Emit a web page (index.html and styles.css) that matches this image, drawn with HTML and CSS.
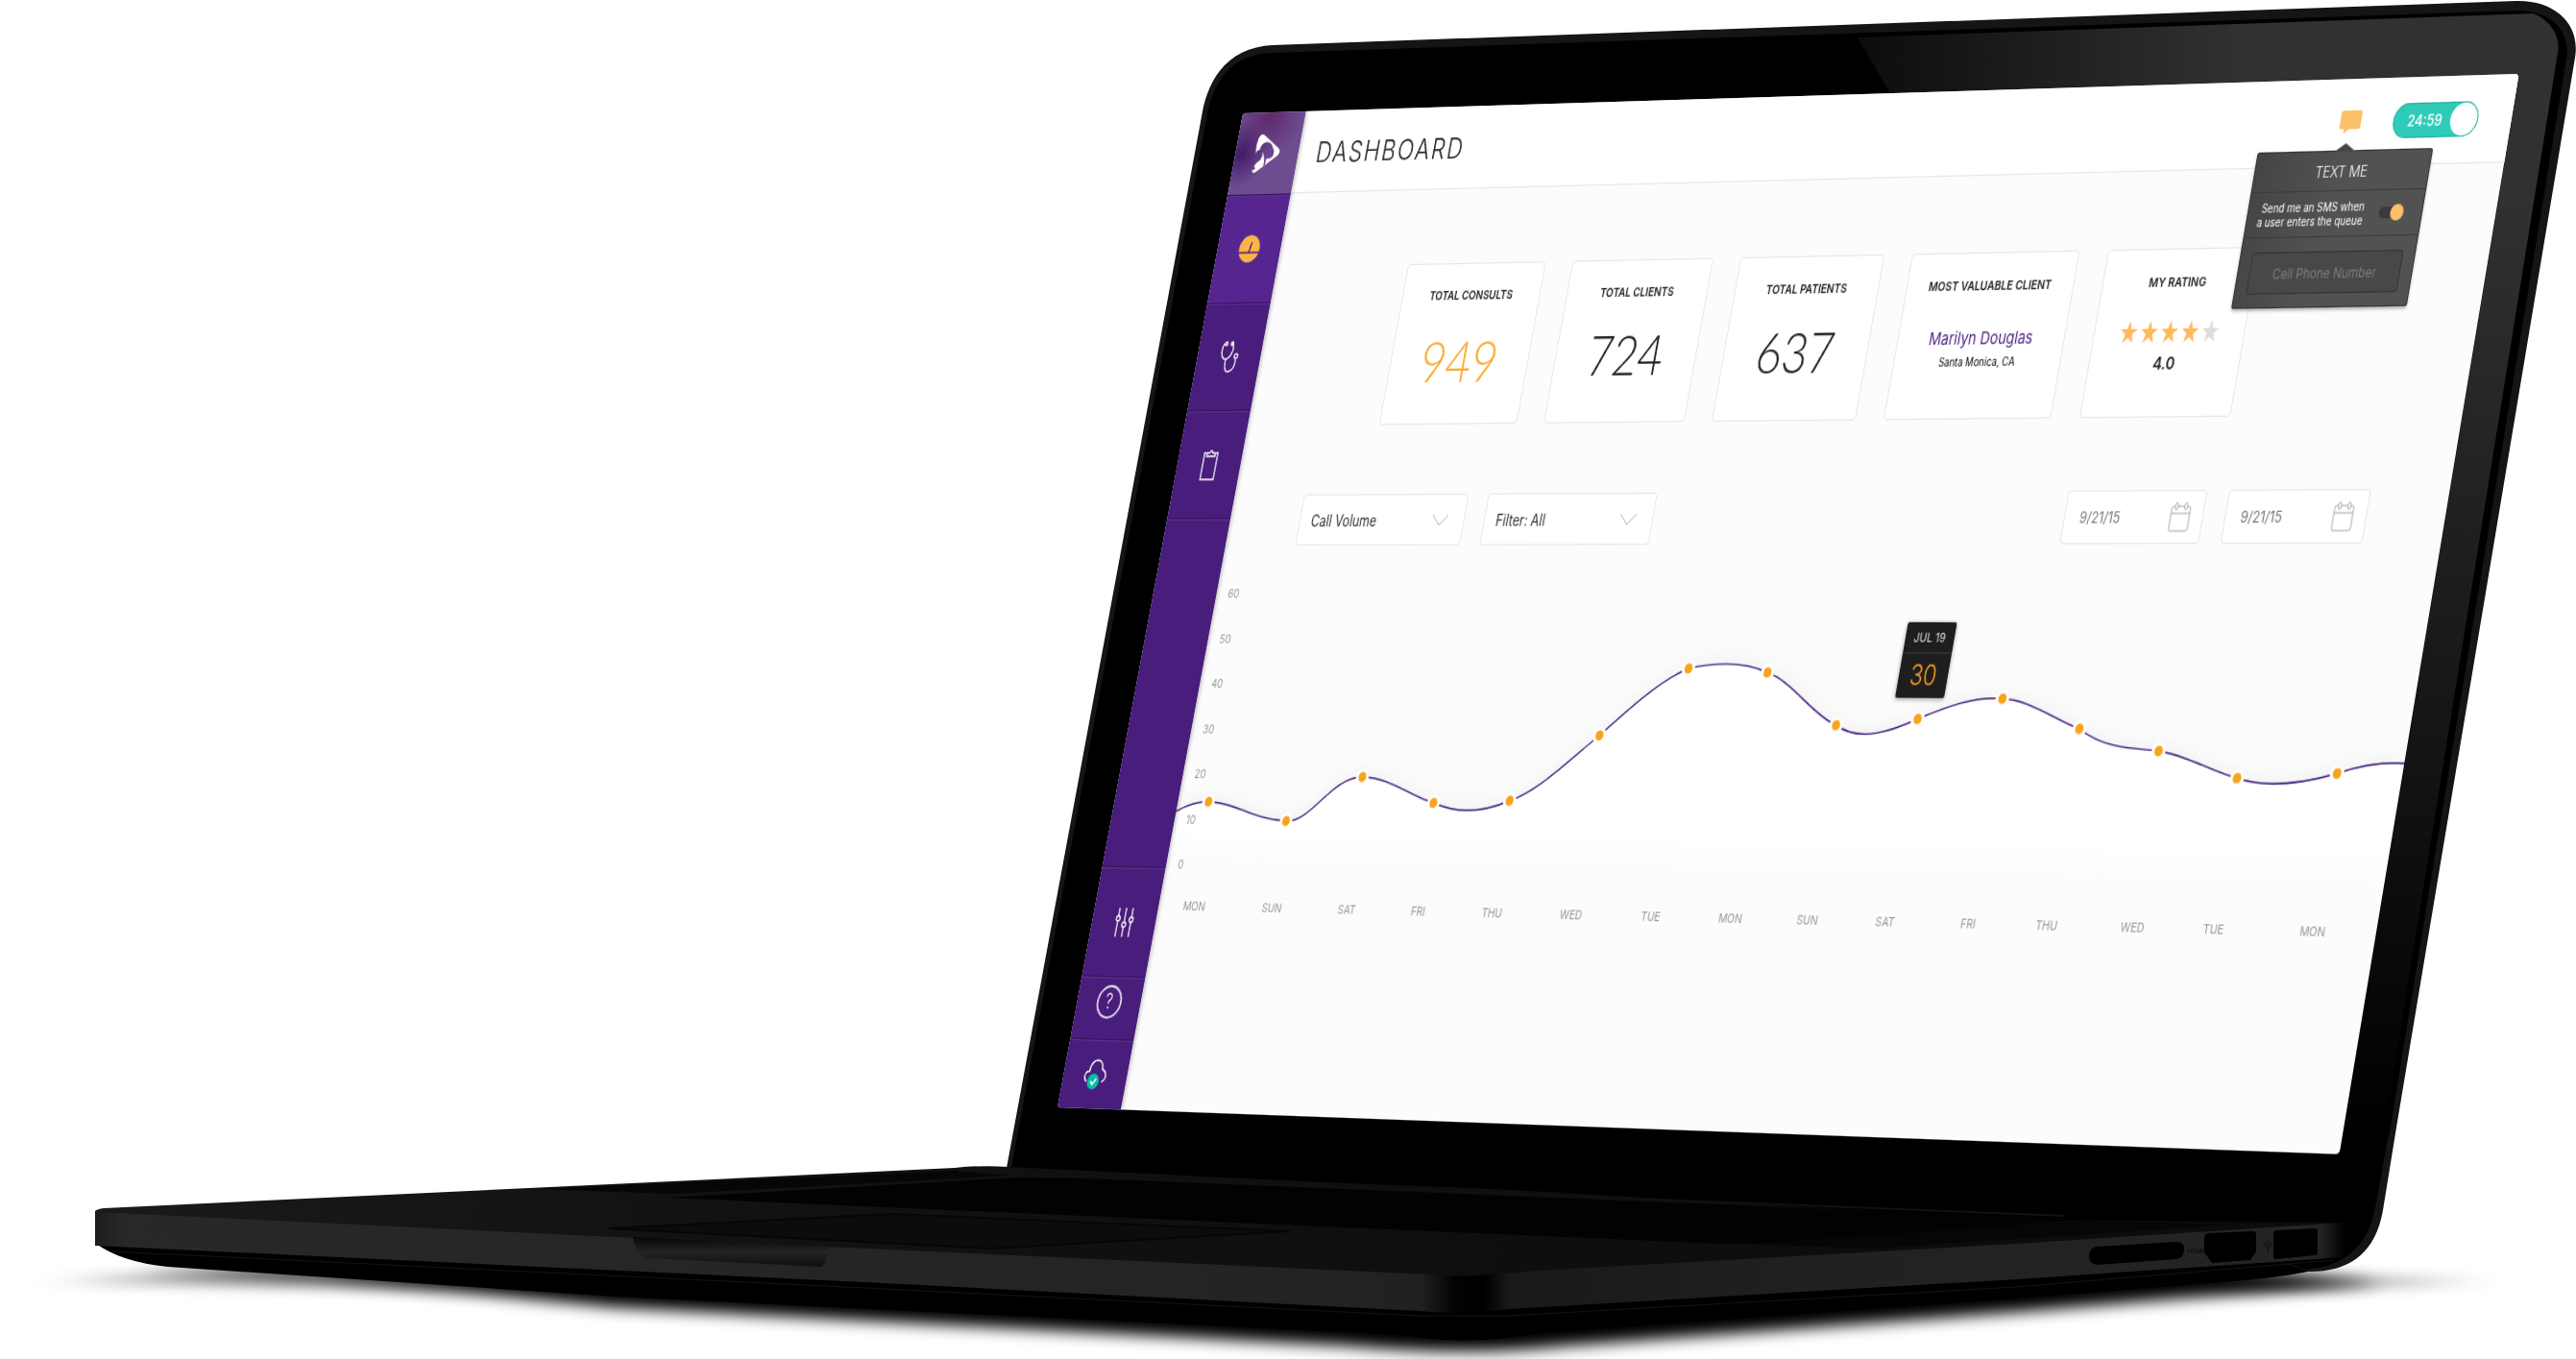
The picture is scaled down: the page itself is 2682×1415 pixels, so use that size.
FILE: index.html
```html
<!DOCTYPE html>
<html lang="en">
<head>
<meta charset="utf-8">
<meta name="viewport" content="width=device-width, initial-scale=1">
<title>Dashboard</title>
<link rel="stylesheet" href="styles.css">
</head>
<body>
<div class="stage" id="stage">

  <svg class="laptop" viewBox="0 0 2682 1415" aria-hidden="true">
    <defs>
      <filter id="soft" x="-5%" y="-60%" width="110%" height="220%"><feGaussianBlur stdDeviation="8"/></filter>
      <filter id="wide" x="-10%" y="-100%" width="120%" height="300%"><feGaussianBlur stdDeviation="26 7"/></filter>
      <linearGradient id="glareX" gradientUnits="userSpaceOnUse" x1="1930" y1="0" x2="2330" y2="0">
        <stop offset="0" stop-color="#0c0c0c"/><stop offset="1" stop-color="#313131"/>
      </linearGradient>
      <linearGradient id="glareY" gradientUnits="userSpaceOnUse" x1="0" y1="200" x2="0" y2="1180">
        <stop offset="0" stop-color="#000" stop-opacity="0"/><stop offset="1" stop-color="#000"/>
      </linearGradient>
      <linearGradient id="faceL" gradientUnits="userSpaceOnUse" x1="99" y1="0" x2="1552" y2="0">
        <stop offset="0" stop-color="#1c1c1c"/><stop offset=".02" stop-color="#282828"/>
        <stop offset=".9" stop-color="#232323"/><stop offset=".95" stop-color="#202020"/><stop offset=".975" stop-color="#020202"/><stop offset="1" stop-color="#000"/>
      </linearGradient>
      <linearGradient id="faceR" gradientUnits="userSpaceOnUse" x1="1545" y1="0" x2="2442" y2="0">
        <stop offset="0" stop-color="#000"/><stop offset=".03" stop-color="#191919"/><stop offset=".4" stop-color="#202121"/>
        <stop offset=".97" stop-color="#242424"/><stop offset="1" stop-color="#000"/>
      </linearGradient>
      <linearGradient id="deck" gradientUnits="userSpaceOnUse" x1="99" y1="0" x2="2100" y2="0">
        <stop offset="0" stop-color="#191a1a"/><stop offset=".3" stop-color="#111212"/><stop offset="1" stop-color="#0b0c0c"/>
      </linearGradient>
      <linearGradient id="notch" x1="0" y1="0" x2="0" y2="1">
        <stop offset="0" stop-color="#060606"/><stop offset=".5" stop-color="#242424"/><stop offset="1" stop-color="#0e0e0e"/>
      </linearGradient>
    </defs>

    <g class="shadow">
      <path d="M140 1322 L330 1330 L640 1361 L1400 1401 Q1530 1412 1620 1402 L2100 1366 L2340 1346 L2480 1336 L2300 1320 L640 1320 Z" filter="url(#soft)"/>
      <path d="M60 1334 L300 1318 L500 1345 Z M2330 1326 L2580 1334 L2300 1348 Z" opacity=".4" filter="url(#wide)"/>
    </g>

    <path class="ink" d="M99 1294 Q125 1314 175 1319 L640 1350 L1460 1390 Q1530 1402 1600 1388 L2100 1352 L2338 1333 Q2390 1328 2410 1322 L2440 1270 L1600 1300 Z"/>

    <path class="rim" d="M1048 1216 L1252 116 C1260 75 1284 49 1325 47 L2620 1 C2660 0 2687 25 2681 60 L2494 1180 L2481 1260 Q2470 1324 2405 1324 L2300 1290 Z"/>
    <path class="ink" d="M1053 1216 L1257 118 C1265 79 1286 56 1326 55 L2621 11 C2656 11 2677 32 2672 62 L2487 1180 L2473 1258 Q2462 1316 2402 1322 L2300 1290 Z"/>
    <path fill="url(#glareX)" d="M1934 39 L2638 14 C2656 22 2666 38 2663 55 L2482 1180 L2436 1202 L2623 77 L1968 97 Z"/>
    <path fill="url(#glareY)" d="M2600 190 L2650 190 L2487 1185 L2430 1205 Z"/>

    <path fill="url(#deck)" d="M99 1261 Q101 1259 108 1258 L994 1216 Q1022 1213 1050 1215 L1400 1232 L2180 1262 L2438 1273 L2100 1300 L1570 1332 H1490 L640 1294 L99 1268 Z"/>
    <path class="ink" d="M1050 1208 L2340 1250 L2438 1273 L2100 1270 Z"/>
    <path class="vent" d="M560 1238 L994 1219 L1050 1224 L700 1243 Z"/>
    <path class="keys" d="M696 1247 L1060 1226 L1130 1227 L2170 1270 L1870 1294 L1790 1295 Z"/>
    <path class="vent" d="M1820 1295 L2170 1271 L2320 1275 L1950 1300 Z"/>
    <path class="keyline" d="M1100 1224 L2150 1266"/>
    <path class="pad" d="M634 1279 L929 1264 L1343 1282 L1031 1300 Z"/>

    <path fill="url(#faceL)" d="M99 1262 L640 1288 L1490 1327 Q1520 1330 1548 1327 L1548 1365 Q1510 1369 1478 1365 L900 1335 L99 1297 Z"/>
    <path fill="url(#faceR)" d="M1546 1327 Q1570 1327 1600 1323 L2100 1295 L2440 1273 L2440 1309 L2100 1332 L1571 1363 L1546 1366 Z"/>
    <path class="seam" d="M115 1303 L900 1341 L1478 1370 L1571 1370 L2100 1340 L2430 1312"/>
    <path fill="url(#notch)" d="M659 1288 L863 1298 Q862 1312 856 1319 L675 1310 Q661 1306 659 1288 Z"/>

    <path class="port" d="M2183 1298 L2266 1293 Q2274 1293 2274 1300 Q2274 1310 2266 1311 L2183 1317 Q2175 1316 2175 1308 Q2175 1299 2183 1298 Z"/>
    <path class="port" d="M2299 1284 L2345 1282 Q2349 1282 2349 1286 L2349 1303 L2343 1312 L2303 1315 L2295 1304 L2295 1289 Q2295 1285 2299 1284 Z"/>
    <path class="port" d="M2370 1281 L2410 1279 Q2413 1279 2413 1282 L2413 1304 Q2413 1307 2410 1307 L2370 1311 Q2367 1311 2367 1308 L2367 1284 Q2367 1281 2370 1281 Z"/>
    <text class="port-label" x="2277" y="1305">HDMI</text>
    <path class="usb" d="M2361 1290 V1304 M2358 1293 V1297 L2361 1300 L2364 1297 V1293"/>
  </svg>

  <div class="screen" id="screen">
    <nav class="sidebar" aria-label="Main">
      <a class="logo" href="#" aria-label="Home">
        <svg width="34" height="38" viewBox="0 0 34 38"><path fill="#fff" fill-rule="evenodd" d="M3 19 C2 11 2 5 5 2 C7 0 9 1 12 3 L28 13 C33 16 33 18 30 21 L8 35 C5 37 3 37 2 33 C3 34 5 34 6 32 C3 31 4 28 8 26 C12 24 12 20 11 17 C13 19 14 22 15 25 L15 30 L17 29 L17 24 C19 23 22 24 24 22 C26 19 25 15 23 14 C21 9 15 7 11 9 C8 11 7 13 7 16 C5 14 4 16 3 19 Z"/></svg>
      </a>
      <a class="nav-item nav-active" href="#" aria-label="Dashboard">
        <svg width="26" height="26" viewBox="0 0 26 26"><circle cx="13" cy="13" r="12.5" fill="#fdb447"/><path d="M.5 16.5 H25.5 M13 16 L15 7" stroke="#4a1d7c" stroke-width="1.6" fill="none"/></svg>
      </a>
      <a class="nav-item" href="#" aria-label="Consults">
        <svg class="line-icon" width="26" height="30" viewBox="0 0 26 30"><path d="M6 2 C2 4 2 12 5 15 C7 17 9 17 11 16 C16 13 18 6 14 2"/><circle cx="7" cy="2.500" r="1.500"/><circle cx="14" cy="2.500" r="1.500"/><path d="M9 17 C9 25 11 29 15 28 C20 27 22 22 21 17"/><circle cx="21" cy="14" r="2"/></svg>
      </a>
      <a class="nav-item" href="#" aria-label="Reports">
        <svg class="line-icon" width="20" height="28" viewBox="0 0 20 28"><path d="M4 3 H2 V27 H18 V3 H16"/><path d="M5 6 V3 H8 Q10 -1 12 3 H15 V6 Z"/></svg>
      </a>
      <div class="nav-space"></div>
      <a class="nav-item" href="#" aria-label="Settings">
        <svg class="line-icon" width="22" height="26" viewBox="0 0 22 26"><path d="M3 0 V7 M3 12 V26 M11 0 V12 M11 18 V26 M19 0 V8 M19 13 V26"/><circle cx="3" cy="9.500" r="2.300"/><circle cx="11" cy="15" r="2.300"/><circle cx="19" cy="10.500" r="2.300"/></svg>
      </a>
      <a class="nav-item nav-help" href="#" aria-label="Help"><span class="help">?</span></a>
      <a class="nav-item nav-cloud" href="#" aria-label="Sync status">
        <svg width="28" height="28" viewBox="0 0 28 28"><path d="M4 20 C0 18 0 11 6 11 C6 4 10 1 14 1 C19 1 21 5 21 9 C27 11 28 18 22 20" fill="none" stroke="#fff" stroke-width="1.500"/><circle cx="12" cy="20" r="7" fill="#06bfa8"/><path d="M9 20 L11.500 22.500 L15.500 17.500" fill="none" stroke="#fff" stroke-width="1.800"/></svg>
      </a>
    </nav>

    <main class="main">
      <header class="topbar">
        <h1 class="title">DASHBOARD</h1>
        <button class="message" type="button" aria-label="Messages">
          <svg width="24" height="22" viewBox="0 0 24 22"><path fill="#fdc06a" d="M3 1 H21 Q23 1 23 3 V15 Q23 17 21 17 H11 L6 21 V17 H3 Q1 17 1 15 V3 Q1 1 3 1 Z"/></svg>
        </button>
        <label class="timer"><input type="checkbox" checked><span>24:59</span></label>

        <form class="popover">
          <h2 class="popover-title">TEXT ME</h2>
          <label class="popover-row">
            <span>Send me an SMS when<br>a user enters the queue</span>
            <input class="switch" type="checkbox" checked>
          </label>
          <div class="popover-field"><input class="phone" type="tel" placeholder="Cell Phone Number" aria-label="Cell Phone Number"></div>
        </form>
      </header>

      <section class="cards">
        <article class="card"><h3>TOTAL CONSULTS</h3><p class="count count-hot">949</p></article>
        <article class="card"><h3>TOTAL CLIENTS</h3><p class="count">724</p></article>
        <article class="card"><h3>TOTAL PATIENTS</h3><p class="count">637</p></article>
        <article class="card card-wide"><h3>MOST VALUABLE CLIENT</h3><p class="client">Marilyn Douglas</p><p class="place">Santa Monica, CA</p></article>
        <article class="card"><h3>MY RATING</h3>
          <svg class="stars" width="108" height="20" viewBox="0 0 108 20" role="img" aria-label="4 of 5 stars">
            <defs><path id="star" d="M10 0 L12.300 7 H19 L13.600 11.600 L15.700 19 L10 14.600 L4.300 19 L6.400 11.600 L1 7 H7.700 Z"/></defs>
            <g fill="#fdb95b"><use href="#star"/><use href="#star" x="22"/><use href="#star" x="44"/><use href="#star" x="66"/></g>
            <use href="#star" x="88" fill="#ddd"/>
          </svg>
          <p class="score">4.0</p>
        </article>
      </section>

      <section class="filters">
        <div class="field field-select">
          <select aria-label="Metric"><option>Call Volume</option></select>
          <svg width="20" height="11" viewBox="0 0 20 11"><path d="M1 1 L10 10 L19 1"/></svg>
        </div>
        <div class="field field-select">
          <select aria-label="Filter"><option>Filter: All</option></select>
          <svg width="20" height="11" viewBox="0 0 20 11"><path d="M1 1 L10 10 L19 1"/></svg>
        </div>
        <div class="field field-date field-first">
          <input type="text" value="9/21/15" aria-label="From">
          <svg width="22" height="26" viewBox="0 0 22 26"><path d="M4 4 H3 Q1 4 1 6 V23 Q1 25 3 25 H19 Q21 25 21 23 V6 Q21 4 19 4 H18 M8 4 H14 M1 10 H21"/><ellipse cx="6" cy="4" rx="1.500" ry="3"/><ellipse cx="16" cy="4" rx="1.500" ry="3"/></svg>
        </div>
        <div class="field field-date">
          <input type="text" value="9/21/15" aria-label="To">
          <svg width="22" height="26" viewBox="0 0 22 26"><path d="M4 4 H3 Q1 4 1 6 V23 Q1 25 3 25 H19 Q21 25 21 23 V6 Q21 4 19 4 H18 M8 4 H14 M1 10 H21"/><ellipse cx="6" cy="4" rx="1.500" ry="3"/><ellipse cx="16" cy="4" rx="1.500" ry="3"/></svg>
        </div>
      </section>

      <section class="chart">
        <svg class="plot" viewBox="77 395 1363 505" role="img" aria-label="Call volume by day">
          <defs><linearGradient id="area" x1="0" y1="0" x2="0" y2="1"><stop offset="0" stop-color="#fff"/><stop offset=".6" stop-color="#fff"/><stop offset="1" stop-color="#fff" stop-opacity="0"/></linearGradient></defs>
          <path class="area" fill="url(#area)" d="M77 634 C89 628 102 625 114 625 C146 625 170 640 211 641 C240 643 256 601 292 601 C325 601 351 617 381 623 C411 632 440 631 469 620 C499 612 529 584 559 562 C588 538 618 513 647 503 C680 497 710 497 737 506 C766 513 795 542 824 551 C854 566 888 555 913 545 C943 534 972 525 1002 527 C1032 528 1062 544 1091 552 C1120 568 1150 568 1180 570 C1209 573 1238 586 1268 592 C1302 600 1337 596 1372 587 C1395 580 1417 577 1440 578 V740 H77 Z"/>
          <path class="curve" d="M77 634 C89 628 102 625 114 625 C146 625 170 640 211 641 C240 643 256 601 292 601 C325 601 351 617 381 623 C411 632 440 631 469 620 C499 612 529 584 559 562 C588 538 618 513 647 503 C680 497 710 497 737 506 C766 513 795 542 824 551 C854 566 888 555 913 545 C943 534 972 525 1002 527 C1032 528 1062 544 1091 552 C1120 568 1150 568 1180 570 C1209 573 1238 586 1268 592 C1302 600 1337 596 1372 587 C1395 580 1417 577 1440 578"/>
          <g class="dots">
            <circle cx="114" cy="625" r="6"/><circle cx="211" cy="641" r="6"/><circle cx="292" cy="601" r="6"/><circle cx="381" cy="623" r="6"/><circle cx="469" cy="620" r="6"/><circle cx="559" cy="562" r="6"/><circle cx="647" cy="503" r="6"/><circle cx="737" cy="506" r="6"/><circle cx="824" cy="551" r="6"/><circle cx="913" cy="545" r="6"/><circle cx="1002" cy="527" r="6"/><circle cx="1091" cy="552" r="6"/><circle cx="1180" cy="570" r="6"/><circle cx="1268" cy="592" r="6"/><circle cx="1372" cy="587" r="6"/>
          </g>
          <g class="axis">
            <text x="91" y="442">60</text><text x="91" y="483">50</text><text x="91" y="523">40</text><text x="91" y="564">30</text><text x="91" y="604">20</text><text x="91" y="645">10</text><text x="91" y="685">0</text>
          </g>
          <g class="axis days">
            <text x="120" y="722">MON</text><text x="213" y="722">SUN</text><text x="302" y="722">SAT</text><text x="386" y="722">FRI</text><text x="472" y="722">THU</text><text x="563" y="722">WED</text><text x="654" y="722">TUE</text><text x="744" y="722">MON</text><text x="830" y="722">SUN</text><text x="916" y="722">SAT</text><text x="1007" y="722">FRI</text><text x="1092" y="722">THU</text><text x="1184" y="722">WED</text><text x="1270" y="722">TUE</text><text x="1374" y="722">MON</text>
          </g>
        </svg>
        <div class="tip"><span class="tip-date">JUL 19</span><span class="tip-value">30</span></div>
      </section>
    </main>
  </div>
</div>
<script src="screen.js"></script>
</body>
</html>
```
FILE: styles.css
```css
* {
  box-sizing: border-box;
}

body {
  margin: 0;
  background: #fff;
  font-family: Inter, "Liberation Sans", sans-serif;
}

h1, h2, h3, p {
  margin: 0;
}

/* Laptop */
.stage {
  position: relative;
  width: 100%;
  aspect-ratio: 2682 / 1415;
  overflow: hidden;
}

.laptop {
  display: block;
  width: 100%;
  height: 100%;
}

.ink, .shadow { fill: #000; }
.rim { fill: #141515; }
.keys { fill: #020202; }
.vent { fill: #060606; }
.pad { fill: #0b0d0d; stroke: #060606; stroke-width: 2; }
.keyline { stroke: #111; stroke-width: 2; }
.seam { fill: none; stroke: #141414; stroke-width: 1; }
.port { fill: #000; }
.port-label { font: 7px Roboto, sans-serif; fill: #0a0a0a; }
.usb { fill: none; stroke: #0a0a0a; stroke-width: 1; }

/* Display surface: a 1440 x 900 desktop that screen.js projects onto the lid */
.screen {
  position: absolute;
  top: 0;
  left: 0;
  display: flex;
  width: 1440px;
  height: 900px;
  overflow: hidden;
  border-radius: 4px;
  outline: 1px solid transparent;
  background: #fcfcfd;
  color: #222;
  transform-origin: 0 0;
}

/* Sidebar */
.sidebar {
  z-index: 1;
  display: flex;
  flex-direction: column;
  flex: none;
  width: 77px;
  background: #481d7b;
  box-shadow: 1px 0 5px rgba(0, 0, 0, .3);
}

.logo {
  display: grid;
  place-items: center;
  height: 75px;
  background:
    radial-gradient(circle at 10% 50%, #421a68 0, rgba(66, 26, 104, 0) 40%),
    radial-gradient(circle at 45% 5%, #5f2a6c 0, rgba(95, 42, 108, 0) 50%),
    #6d4c90;
}

.nav-item {
  display: grid;
  place-items: center;
  height: 98px;
  border-top: 1px solid #351159;
  box-shadow: inset 0 1px #5d348c;
}

.nav-active { height: 99px; background: #562590; }
.nav-space { flex: 1; border-top: 1px solid #351159; box-shadow: inset 0 1px #5d348c; }
.nav-help { height: 56px; padding-bottom: 12px; }
.nav-cloud { height: 62px; }

.line-icon {
  overflow: visible;
  fill: none;
  stroke: #fff;
  stroke-width: 1.4;
}

.help {
  display: grid;
  place-items: center;
  width: 30px;
  height: 30px;
  border: 2px solid #e4dcee;
  border-radius: 50%;
  color: #fff;
  font-size: 18px;
  font-weight: 300;
}

.nav-item:any-link { text-decoration: none; }

/* Top bar */
.main {
  display: flex;
  flex-direction: column;
  flex: 1;
}

.topbar {
  position: relative;
  display: flex;
  align-items: center;
  height: 75px;
  padding: 0 35px 0 22px;
  border-bottom: 1px solid #e6e6e6;
  background: #fff;
}

.title {
  flex: 1;
  font-size: 26px;
  font-weight: 300;
  letter-spacing: 2px;
}

.message {
  display: flex;
  padding: 0;
  margin-right: 33px;
  border: 0;
  background: none;
}

.timer {
  position: relative;
  display: flex;
  align-items: center;
  width: 89px;
  height: 30px;
  padding-left: 15px;
  border-radius: 15px;
  background: #2fcbb8;
  box-shadow: inset 0 0 0 1px #21b09d;
  color: #fff;
  font-size: 13px;
  font-weight: 500;
}

.timer input {
  position: absolute;
  top: 1px;
  right: 1px;
  width: 28px;
  height: 28px;
  margin: 0;
  appearance: none;
  border-radius: 50%;
  background: #fff;
}

/* Text-me popover */
.popover {
  position: absolute;
  top: 61px;
  right: 77px;
  z-index: 2;
  width: 186px;
  border-radius: 3px;
  background: linear-gradient(100deg, #444, #525252 45%);
  box-shadow: inset 0 0 0 1px #333, 0 2px 3px rgba(0, 0, 0, .3);
  color: #fff;
}

.popover::before {
  content: "";
  position: absolute;
  top: -6px;
  left: 82px;
  width: 22px;
  height: 7px;
  background: #444;
  clip-path: polygon(50% 0, 100% 100%, 0 100%);
}

.popover-title {
  height: 35px;
  font-size: 13px;
  font-weight: 300;
  line-height: 37px;
  text-align: center;
  border-bottom: 1px solid #3c3c3c;
}

.popover-row {
  display: flex;
  align-items: center;
  justify-content: space-between;
  height: 39px;
  padding: 0 20px 0 0;
  border-bottom: 1px solid #3c3c3c;
  font-size: 10px;
  line-height: 12px;
  text-align: right;
  white-space: nowrap;
}

.popover-row span { flex: 1; margin-right: 16px; }

.switch {
  position: relative;
  width: 26px;
  height: 10px;
  margin: 0;
  appearance: none;
  border-radius: 5px;
  background: #3b3840;
}

.switch::before {
  content: "";
  position: absolute;
  top: -2px;
  right: 0;
  width: 14px;
  height: 14px;
  border-radius: 50%;
  background: #fdc06a;
}

.popover-field { padding: 12px 13px; }

.phone {
  display: block;
  width: 100%;
  height: 36px;
  border: 1px solid #34323a;
  border-radius: 3px;
  background: #484848;
  color: #fff;
  font: 12px Inter, sans-serif;
  text-align: center;
}

.phone::placeholder { color: #7d7d7d; }

/* Stat cards */
.cards {
  display: flex;
  gap: 31px;
  padding: 67px 0 0 158px;
}

.card {
  width: 163px;
  height: 145px;
  padding-top: 20px;
  border: 1px solid #e6e6e6;
  border-radius: 4px;
  background: #fff;
  text-align: center;
}

.card-wide { width: 185px; }

.card h3 {
  font-size: 11px;
  font-weight: 600;
  line-height: 16px;
}

.count {
  margin-top: 17px;
  font-family: Lato, sans-serif;
  font-size: 50px;
  font-weight: 300;
  line-height: 60px;
}

.count-hot { margin-top: 20px; color: #fcaa36; font-size: 52px; }
.client { margin-top: 28px; color: #4b1f80; font-size: 15px; font-weight: 400; line-height: 20px; }
.place { color: #000; font-size: 10px; line-height: 20px; }
.stars { display: block; margin: 25px auto 7px; }
.score { font-size: 15px; font-weight: 600; line-height: 20px; }

/* Filters */
.filters {
  display: flex;
  gap: 23px;
  padding: 62px 82px 0 84px;
}

.field {
  display: flex;
  align-items: center;
  height: 46px;
  border: 1px solid #e6e6e6;
  border-radius: 4px;
  background: #fff;
}

.field-select { width: 196px; padding: 0 18px 0 13px; }
.field-date { width: 150px; padding: 0 13px 0 16px; }
.field-first { margin-left: auto; }

.field select, .field input {
  flex: 1;
  min-width: 0;
  height: 44px;
  padding: 0;
  appearance: none;
  border: 0;
  background: none;
  color: #333;
  font: 14px Inter, sans-serif;
}

.field input { color: #777; font-size: 13px; }
.field svg { flex: none; fill: none; stroke: #aaa; stroke-width: 1; }

/* Chart */
.chart {
  position: relative;
  flex: 1;
}

.plot {
  display: block;
  width: 100%;
  height: 100%;
}

.area { filter: drop-shadow(0 -5px 8px rgba(0, 0, 0, .04)); }
.curve { fill: none; stroke: #41207c; stroke-width: 1.4; }
.dots { fill: #f7a41d; stroke: #fff; stroke-width: 3; }
.axis { fill: #999; font-size: 11px; }
.days { text-anchor: middle; }

.tip {
  position: absolute;
  top: 13.3%;
  left: 59.2%;
  display: flex;
  flex-direction: column;
  width: 54px;
  border-radius: 2px;
  background: #1e1e1e;
  box-shadow: 0 1px 4px rgba(0, 0, 0, .4);
  text-align: center;
}

.tip-date { border-bottom: 1px solid #3a3a3a; color: #ddd; font-size: 11px; line-height: 26px; }
.tip-value { color: #f9a01f; font-size: 24px; font-weight: 300; line-height: 38px; }
```
FILE: screen.js
```js
// Corners of the display on the laptop drawing (viewBox units): TL, TR, BR, BL.
const corners = [[1294, 118], [2623, 77], [2436, 1202], [1101, 1153]];
const stage = document.getElementById('stage');
const screenEl = document.getElementById('screen');

function project() {
  const k = stage.clientWidth / 2682;
  const [[x0, y0], [x1, y1], [x2, y2], [x3, y3]] = corners.map(([x, y]) => [x * k, y * k]);
  const w = screenEl.offsetWidth;
  const h = screenEl.offsetHeight;
  const ax = x1 - x2, ay = y1 - y2, bx = x3 - x2, by = y3 - y2;
  const sx = x0 - x1 + x2 - x3, sy = y0 - y1 + y2 - y3;
  const det = ax * by - ay * bx;
  const g = (sx * by - sy * bx) / det;
  const p = (ax * sy - ay * sx) / det;
  const m = [
    (x1 - x0 + g * x1) / w, (y1 - y0 + g * y1) / w, 0, g / w,
    (x3 - x0 + p * x3) / h, (y3 - y0 + p * y3) / h, 0, p / h,
    0, 0, 1, 0,
    x0, y0, 0, 1
  ];
  screenEl.style.transform = `matrix3d(${m.join(',')})`;
}

project();
addEventListener('resize', project);
```
